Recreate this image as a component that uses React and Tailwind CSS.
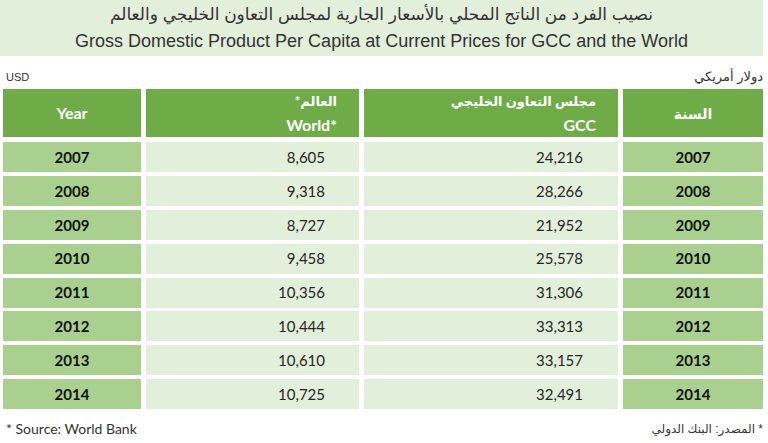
const rows = [
  ['2007', '8,605', '24,216'],
  ['2008', '9,318', '28,266'],
  ['2009', '8,727', '21,952'],
  ['2010', '9,458', '25,578'],
  ['2011', '10,356', '31,306'],
  ['2012', '10,444', '33,313'],
  ['2013', '10,610', '33,157'],
  ['2014', '10,725', '32,491'],
]

const cols = 'grid grid-cols-[138px_213px_254px_140px] gap-x-[5px]'
const calibri = "font-['Lato','Open_Sans','DejaVu_Sans',sans-serif]"
const arial = "font-['Liberation_Sans','DejaVu_Sans',sans-serif]"

export default function App() {
  return (
    <div className="w-[768px] h-[443px] bg-white overflow-hidden text-[#262626]">
      {/* title band */}
      <div className={`w-[763px] h-[56px] bg-[#e2efda] flex flex-col items-center pt-[3px] ${arial}`}>
        <div dir="rtl" className="text-[17px] leading-[24px] text-[#333]">
          نصيب الفرد من الناتج المحلي بالأسعار الجارية لمجلس التعاون الخليجي والعالم
        </div>
        <div className="text-[18px] leading-[24px] text-[#333] mt-[2px]">
          Gross Domestic Product Per Capita at Current Prices for GCC and the World
        </div>
      </div>

      {/* units */}
      <div className={`flex justify-between w-[763px] h-[33px] items-center pt-[9px] ${arial}`}>
        <span className="text-[11px] pl-[6px] text-[#333]">USD</span>
        <span dir="rtl" className="text-[13px] text-[#333]">دولار أمريكي</span>
      </div>

      {/* table */}
      <div className={`pl-[3px] ${calibri}`}>
        <div className={`${cols} h-[47px] text-white font-bold text-[16px]`}>
          <div className="bg-[#6fac47] flex items-center justify-center">Year</div>
          <div className="bg-[#6fac47] flex flex-col items-end justify-center pr-[22px] leading-[24px]">
            <span dir="rtl" className="text-[13px]">العالم*</span>
            <span>World*</span>
          </div>
          <div className="bg-[#6fac47] flex flex-col items-end justify-center pr-[22px] leading-[24px]">
            <span dir="rtl" className="text-[13px]">مجلس التعاون الخليجي</span>
            <span>GCC</span>
          </div>
          <div dir="rtl" className="bg-[#6fac47] flex items-center justify-center text-[14px]">السنة</div>
        </div>

        <div className="flex flex-col gap-y-[3.9px] mt-[6px]">
          {rows.map(([year, world, gcc]) => (
            <div key={year} className={`${cols} h-[30px] text-[15px]`}>
              <div className="bg-[#a9d08e] flex items-center justify-center font-bold text-[#111]">{year}</div>
              <div className="bg-[#e2efda] flex items-center justify-end pr-[34px]">{world}</div>
              <div className="bg-[#e2efda] flex items-center justify-end pr-[35px]">{gcc}</div>
              <div className="bg-[#a9d08e] flex items-center justify-center font-bold text-[#111]">{year}</div>
            </div>
          ))}
        </div>
      </div>

      {/* footer */}
      <div className="flex justify-between w-[763px] mt-[9px] items-center">
        <span className={`text-[14px] pl-[6px] text-[#333] ${calibri}`}>* Source: World Bank</span>
        <span dir="rtl" className={`text-[12px] text-[#333] ${arial}`}>* المصدر: البنك الدولي</span>
      </div>
    </div>
  )
}
